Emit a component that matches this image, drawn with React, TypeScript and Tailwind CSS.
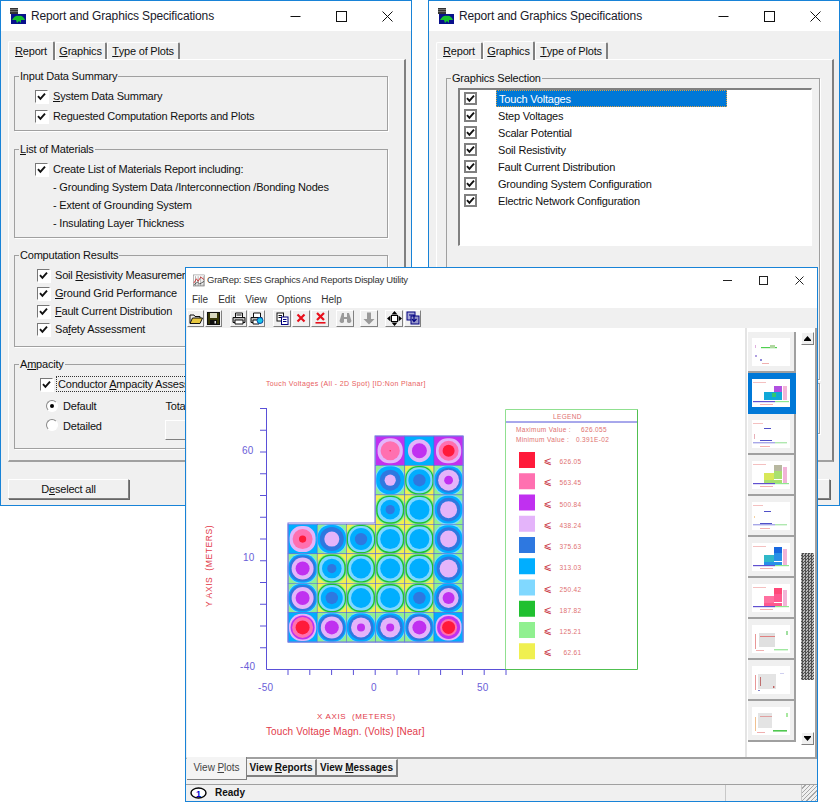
import * as React from "react";

const R = "#ff1a3a";
const K = "#ff70b0";
const P = "#c030f0";
const L = "#e4b4fa";
const B = "#2e78e0";
const C = "#00aeff";
const A = "#80d8ff";
const G = "#20c030";
const M = "#90f090";
const Y = "#f0f050";

const LEGEND: [string, string][] = [
  [R, "626.05"],
  [K, "563.45"],
  [P, "500.84"],
  [L, "438.24"],
  [B, "375.63"],
  [C, "313.03"],
  [A, "250.42"],
  [G, "187.82"],
  [M, "125.21"],
  [Y, "62.61"],
];

type Cell = { bg: string; rings: [string, number][] };

const cy: Cell = { bg: Y, rings: [[M, 15], [G, 14], [A, 12.6], [C, 10]] };
const bl: Cell = { bg: Y, rings: [[M, 15], [G, 14], [A, 12.6], [C, 9.8], [B, 4.6]] };
const bs: Cell = { bg: Y, rings: [[M, 15], [G, 14.2], [A, 13], [C, 11], [B, 6.2]] };
const li: Cell = { bg: M, rings: [[A, 15], [C, 14.2], [B, 12], [L, 7.5]] };
const la: Cell = { bg: M, rings: [[A, 15], [C, 13.8], [B, 11.8], [L, 8.5]] };
const pu: Cell = { bg: M, rings: [[A, 15], [C, 14.2], [B, 13], [L, 11], [P, 7]] };
const ps: Cell = { bg: M, rings: [[A, 15], [C, 14.2], [B, 12.5], [L, 10], [P, 4]] };
const pt: Cell = { bg: C, rings: [[L, 11.5], [P, 7.5]] };

const HEAT: (Cell | null)[][] = [
  [null, null, null, { bg: P, rings: [[L, 12.6], [K, 9.6], [R, 0.7]] }, pt, { bg: P, rings: [[L, 12.6], [K, 10], [R, 6]] }],
  [null, null, null, { bg: M, rings: [[A, 15], [C, 14], [B, 10.5], [L, 5.6]] }, bs, { bg: M, rings: [[A, 15], [C, 14], [B, 12.5], [L, 10.5], [P, 4.4]] }],
  [null, null, null, bl, cy, la],
  [{ bg: C, rings: [[L, 13], [K, 10], [R, 3.6]] }, li, bs, cy, cy, la],
  [pu, bl, cy, cy, cy, { bg: M, rings: [[A, 15], [C, 14.4], [B, 12], [L, 9]] }],
  [pu, bs, cy, cy, bs, { bg: M, rings: [[A, 15], [C, 14.4], [B, 12.5], [L, 10], [P, 6]] }],
  [{ bg: C, rings: [[L, 13.6], [P, 12], [K, 10.5], [R, 7]] }, pu, ps, ps, pu, { bg: C, rings: [[L, 13], [P, 11.5], [K, 8.5], [R, 6.5]] }],
];

function HeatMap() {
  const x0 = 288;
  const y0 = 436;
  const w = 29.2;
  const h = 29.45;
  return (
    <g>
      {HEAT.map((row, r) =>
        row.map((cell, c) => {
          if (!cell) return null;
          const x = x0 + c * w;
          const y = y0 + r * h;
          const cx = x + w / 2;
          const cyy = y + h / 2;
          return (
            <g key={`${r}-${c}`}>
              <rect x={x} y={y} width={w} height={h} fill={cell.bg} />
              {cell.rings.map(([fill, rad], i) => (
                <rect key={i} x={cx - rad} y={cyy - rad} width={rad * 2} height={rad * 2} rx={rad * (rad > 12.5 ? 0.9 : 1)} fill={fill} />
              ))}
              <rect x={x} y={y} width={w} height={h} fill="none" stroke="#4a60e0" strokeWidth="0.5" />
            </g>
          );
        }),
      )}
      <path d="M288 523 H375 V436 H463 V642 H288 Z" fill="none" stroke="#7f78e0" strokeWidth="1.1" />
    </g>
  );
}

function Plot() {
  const yTicks = Array.from({ length: 12 }, (_, i) => 408.5 + i * 21.75);
  const xTicks = Array.from({ length: 11 }, (_, i) => 288 + i * 21.8);
  return (
    <svg width="558" height="429" viewBox="187 328 558 429" className="block shrink-0" fontFamily="'Liberation Sans', sans-serif">
      <text x="266" y="386" fontSize="7" fill="#e86060" letterSpacing="0.36">
        Touch Voltages (All - 2D Spot) [ID:Non Planar]
      </text>
      <path d="M266.5 408 V669.5 H506" fill="none" stroke="#5a50d8" strokeWidth="1" />
      {yTicks.map((y) => (
        <line key={y} x1="260" x2="266" y1={y} y2={y} stroke="#5a50d8" />
      ))}
      {xTicks.map((x) => (
        <line key={x} x1={x} x2={x} y1="669" y2="675" stroke="#5a50d8" />
      ))}
      <g fontSize="10" fill="#6a60d8" letterSpacing="0.3">
        <text x="242" y="454">60</text>
        <text x="243" y="561">10</text>
        <text x="240" y="670">-40</text>
        <text x="258" y="691">-50</text>
        <text x="371" y="691">0</text>
        <text x="477" y="691">50</text>
      </g>
      <text x="212" y="607" fontSize="8.5" fill="#e23a4a" letterSpacing="0.6" transform="rotate(-90 212 607)">
        Y AXIS&nbsp;&nbsp;(METERS)
      </text>
      <text x="317" y="719" fontSize="8" fill="#e23a4a" letterSpacing="0.65">
        X AXIS&nbsp;&nbsp;(METERS)
      </text>
      <text x="266" y="735" fontSize="10" fill="#e23a4a" letterSpacing="0.12">
        Touch Voltage Magn. (Volts) [Near]
      </text>

      <HeatMap />

      <path d="M505.5 669 V409.5 H637.5" fill="none" stroke="#90e090" strokeWidth="1" />
      <path d="M637.5 409.5 V669.5 H505.5" fill="none" stroke="#50c050" strokeWidth="1" />
      <line x1="506" x2="637" y1="422" y2="422" stroke="#5050d8" />
      <g fontSize="6.5" fill="#e07070" letterSpacing="0.35">
        <text x="553" y="418.5">LEGEND</text>
        <text x="516" y="432">Maximum Value :</text>
        <text x="581" y="432">626.055</text>
        <text x="516" y="442">Minimum Value :</text>
        <text x="576" y="442">0.391E-02</text>
        {LEGEND.map(([fill, value], i) => {
          const y = 452 + i * 21.25;
          return (
            <g key={value}>
              <rect x="519" y={y} width="16" height="16" fill={fill} />
              <text x="543.5" y={y + 12} fontSize="10" fill="#c83040" letterSpacing="0" fontFamily="'DejaVu Sans', sans-serif">
                ⩽
              </text>
              <text x="581.5" y={y + 12} textAnchor="end">
                {value}
              </text>
            </g>
          );
        })}
      </g>
    </svg>
  );
}

function WinControls() {
  return (
    <div className="ml-auto flex items-center gap-[35px]">
      <svg width="11" height="11" viewBox="0 0 11 11"><path d="M0.5 5.5 H10.5" stroke="#111" /></svg>
      <svg width="11" height="11" viewBox="0 0 11 11"><rect x="0.5" y="0.5" width="10" height="10" fill="none" stroke="#111" /></svg>
      <svg width="11" height="11" viewBox="0 0 11 11"><path d="M0.5 0.5 L10.5 10.5 M10.5 0.5 L0.5 10.5" stroke="#111" /></svg>
    </div>
  );
}

function SesIcon() {
  return (
    <svg width="16" height="17" viewBox="0 0 16 17" className="shrink-0">
      <rect x="0" y="0" width="8" height="6" fill="#333" />
      <path d="M0 1.5 H8 M0 3.5 H8" stroke="#999" strokeWidth="0.6" />
      <rect x="1" y="6" width="15" height="10" fill="#08108c" />
      <path d="M2 12 C4 8 7 7 9 8 C11 7 14 9 15 12 L11 12 L11 15 L9 13 L7 15 L6 12 Z" fill="#18c030" />
    </svg>
  );
}

function GraRepIcon() {
  return (
    <svg width="12" height="13" viewBox="0 0 14 14" className="shrink-0">
      <rect x="0.5" y="0.5" width="13" height="13" fill="#fff" stroke="#777" strokeWidth="0.6" />
      <path d="M1 10 L4 5 L6 8 L9 3 L13 6" fill="none" stroke="#e02828" />
      <path d="M1 12.5 H13 M3 2 V13 M6 2 V13 M9 2 V13 M12 2 V13" stroke="#444" strokeWidth="0.5" />
      <path d="M1 12 L5 9 L8 11 L13 8" fill="none" stroke="#222" strokeWidth="0.8" />
    </svg>
  );
}

function CheckMark() {
  return (
    <svg width="9" height="9" viewBox="0 0 9 9">
      <path d="M1 4.2 L3.4 6.8 L8 1.6" fill="none" stroke="#111" strokeWidth="1.9" />
    </svg>
  );
}

function Check() {
  return (
    <span className="flex h-[13px] w-[13px] shrink-0 items-center justify-center border border-t-[#777] border-r-white border-b-white border-l-[#777] bg-white shadow-[1px_1px_0_#fff]">
      <CheckMark />
    </span>
  );
}

function ListCheck() {
  return (
    <span className="flex h-[13px] w-[13px] shrink-0 items-center justify-center border-2 border-[#808080] bg-white">
      <CheckMark />
    </span>
  );
}

function Radio({ on }: { on?: boolean }) {
  return (
    <span className="flex h-[12px] w-[12px] shrink-0 items-center justify-center rounded-full border border-t-[#888] border-r-white border-b-white border-l-[#888] bg-white">
      {on && <span className="h-[4px] w-[4px] rounded-full bg-black" />}
    </span>
  );
}

function Group({ label, className, children }: { label: React.ReactNode; className?: string; children?: React.ReactNode }) {
  return (
    <fieldset className={`border border-[#a0a0a0] shadow-[1px_1px_0_#fff] ${className ?? ""}`}>
      <legend className="ml-[4px] px-[1px] leading-[14px]">{label}</legend>
      {children}
    </fieldset>
  );
}

function CheckRow({ className, children }: { className?: string; children: React.ReactNode }) {
  return (
    <div className={`flex items-center gap-[5px] ${className ?? ""}`}>
      <Check />
      <span>{children}</span>
    </div>
  );
}

function TabStrip({ active }: { active: string }) {
  const tabs: { id: string; w: string; node: React.ReactNode }[] = [
    { id: "report", w: "w-[47px]", node: <><u>R</u>eport</> },
    { id: "graphics", w: "w-[52px]", node: <><u>G</u>raphics</> },
    { id: "plots", w: "w-[73px]", node: <><u>T</u>ype of Plots</> },
  ];
  return (
    <div className="flex h-[18px] items-end whitespace-nowrap">
      {tabs.map((t) => (
        <div
          key={t.id}
          className={`flex items-center justify-center rounded-t-[2px] border-t border-r-2 border-l border-t-white border-r-[#808080] border-l-white ${t.w} ${
            t.id === active ? "relative z-10 -mb-[1px] h-[19px] bg-[#f0f0f0]" : "h-[17px]"
          }`}
        >
          {t.node}
        </div>
      ))}
    </div>
  );
}

function Panel({ className, children }: { className: string; children?: React.ReactNode }) {
  return (
    <div className={`h-[403px] border-t border-r-2 border-b-2 border-l border-t-white border-r-[#808080] border-b-[#a0a0a0] border-l-white ${className}`}>
      {children}
    </div>
  );
}

function SpecWindow({ className, active, children }: { className: string; active: string; children: React.ReactNode }) {
  return (
    <div className={`absolute top-0 flex h-[506px] w-[412px] flex-col border border-[#1883d7] bg-[#f0f0f0] font-['Liberation_Sans',sans-serif] text-[11px] leading-[14px] tracking-[-0.2px] text-[#111] ${className}`}>
      <div className="flex h-[30px] shrink-0 items-center bg-white pr-[18px] pl-[9px]">
        <SesIcon />
        <span className="ml-[5px] text-[12px] tracking-[-0.15px] text-[#1a1a2a]">Report and Graphics Specifications</span>
        <WinControls />
      </div>
      <div className="flex-1 px-[7px] pt-[10px]">
        <TabStrip active={active} />
        {children}
      </div>
    </div>
  );
}

function ReportTab() {
  return (
    <>
      <Panel className="w-[398px] pt-[9px] pl-[5px]">
        <Group label="Input Data Summary" className="h-[62px] w-[374px]">
          <div className="pt-[6px] pl-[20px]">
            <CheckRow><u>S</u>ystem Data Summary</CheckRow>
            <CheckRow className="mt-[6px]">Reguested Computation Reports and Plots</CheckRow>
          </div>
        </Group>
        <Group label={<><u>L</u>ist of Materials</>} className="mt-[11px] h-[96px] w-[374px]">
          <div className="pt-[6px] pl-[20px]">
            <CheckRow>Create List of Materials Report including:</CheckRow>
            <div className="mt-[2px] pl-[18px] leading-[18px]">
              <div>- Grounding System Data /Interconnection /Bonding Nodes</div>
              <div>- Extent of Grounding System</div>
              <div>- Insulating Layer Thickness</div>
            </div>
          </div>
        </Group>
        <Group label="Computation Results" className="mt-[10px] h-[99px] w-[374px]">
          <div className="flex flex-col gap-[4px] pt-[6px] pl-[22px] whitespace-nowrap">
            <CheckRow>Soil <u>R</u>esistivity Measurements</CheckRow>
            <CheckRow><u>G</u>round Grid Performance</CheckRow>
            <CheckRow><u>F</u>ault Current Distribution</CheckRow>
            <CheckRow>Sa<u>f</u>ety Assessment</CheckRow>
          </div>
        </Group>
        <Group label={<>A<u>m</u>pacity</>} className="mt-[10px] h-[92px] w-[374px]">
          <div className="pt-[5px] pl-[25px]">
            <div className="flex items-center gap-[3px] whitespace-nowrap">
              <Check />
              <span className="border border-dotted border-[#333] px-[1px]">Conductor <u>A</u>mpacity Assessment</span>
            </div>
            <div className="mt-[7px] flex items-center gap-[5px] pl-[6px]">
              <Radio on />
              <span>Default</span>
              <span className="ml-[64px]">Total</span>
            </div>
            <div className="mt-[6px] flex items-start gap-[5px] pl-[6px]">
              <Radio />
              <span>Detailed</span>
              <span className="mt-[1px] ml-[58px] h-[20px] w-[60px] border border-t-white border-r-[#808080] border-b-[#808080] border-l-white" />
            </div>
          </div>
        </Group>
      </Panel>
      <div className="mt-[17px] flex h-[20px] w-[121px] items-center justify-center border border-t-white border-r-[#808080] border-b-[#808080] border-l-white shadow-[1px_1px_0_#666]">
        D<u>e</u>select all
      </div>
    </>
  );
}

function GraphicsTab() {
  const items = [
    "Touch Voltages",
    "Step Voltages",
    "Scalar Potential",
    "Soil Resistivity",
    "Fault Current Distribution",
    "Grounding System Configuration",
    "Electric Network Configuration",
  ];
  return (
    <>
      <Panel className="w-[398px] pt-[11px] pl-[9px]">
        <Group label="Graphics Selection" className="h-[309px] w-[374px]">
          <div className="pt-[3px] pl-[11px]">
            <div className="h-[158px] w-[354px] border-t-2 border-r border-b border-l-2 border-t-[#808080] border-r-white border-b-white border-l-[#808080] bg-white pl-[4px]">
              {items.map((item, i) => (
                <div key={item} className="flex h-[17px] items-center">
                  <ListCheck />
                  <span
                    className={`ml-[19px] flex h-[17px] items-center pl-[2px] ${
                      i === 0 ? "w-[231px] border border-dotted border-[#e0a040] bg-[#0078d7] text-white" : ""
                    }`}
                  >
                    {item}
                  </span>
                </div>
              ))}
            </div>
          </div>
        </Group>
        <Group label="" className="mt-[3px] h-[51px] w-[374px]" />
      </Panel>
      <div className="mt-[17px] ml-[290px] h-[20px] w-[104px] border border-t-white border-r-[#808080] border-b-[#808080] border-l-white shadow-[1px_1px_0_#666]" />
    </>
  );
}

const ToolBtn = ({ className, children }: { className?: string; children: React.ReactNode }) => (
  <div className={`flex h-[17px] w-[17px] shrink-0 items-center justify-center border border-t-white border-r-[#808080] border-b-[#808080] border-l-white ${className ?? ""}`}>
    {children}
  </div>
);

function Toolbar() {
  return (
    <div className="flex h-[20px] shrink-0 items-center bg-[#f0f0f0] pl-[1px]">
      <ToolBtn>
        <svg width="14" height="13" viewBox="0 0 14 13"><path d="M1 11 V3 H5 L6 4.5 H11 V6" fill="none" stroke="#111" /><path d="M1 11.5 L3.5 6 H13.5 L11 11.5 Z" fill="#e8c840" stroke="#111" /></svg>
      </ToolBtn>
      <ToolBtn className="ml-[1px]">
        <svg width="13" height="13" viewBox="0 0 13 13"><rect x="0.5" y="0.5" width="12" height="12" fill="#383808" stroke="#111" /><rect x="3" y="1" width="7" height="5" fill="#d8d8c0" /><rect x="3" y="8" width="7" height="4" fill="#111" /><rect x="7.5" y="9" width="1.5" height="2.5" fill="#ddd" /></svg>
      </ToolBtn>
      <ToolBtn className="ml-[8px]">
        <svg width="14" height="13" viewBox="0 0 14 13"><path d="M3.5 5 V1 H10.5 V5" fill="#fff" stroke="#111" /><path d="M1 5.5 H13 V10.5 H1 Z" fill="#bbb" stroke="#111" /><path d="M3 8 H11 V12 H3 Z" fill="#fff" stroke="#111" /><path d="M4.5 3 H9.5" stroke="#111" /></svg>
      </ToolBtn>
      <ToolBtn className="ml-[1px]">
        <svg width="14" height="13" viewBox="0 0 14 13"><path d="M3.5 5 V1 H10.5 V5" fill="#fff" stroke="#111" /><path d="M1 5.5 H12 V10.5 H1 Z" fill="#bbb" stroke="#111" /><path d="M3 8 H9 V12 H3 Z" fill="#fff" stroke="#111" /><circle cx="10" cy="8.5" r="3" fill="#18c8e8" stroke="#0848a8" /></svg>
      </ToolBtn>
      <ToolBtn className="ml-[8px] w-[18px]">
        <svg width="13" height="13" viewBox="0 0 13 13"><rect x="1" y="1" width="6.5" height="8" fill="#fff" stroke="#111" /><path d="M2.5 3.5 H6 M2.5 5.5 H6" stroke="#111" /><rect x="5.5" y="5" width="6.5" height="7.5" fill="#fff" stroke="#000080" /><path d="M7 7.5 H10.5 M7 9.5 H10.5" stroke="#000080" /></svg>
      </ToolBtn>
      <ToolBtn className="ml-[1px] w-[18px]">
        <svg width="10" height="10" viewBox="0 0 10 10"><path d="M1.5 1.5 L8.5 8.5 M8.5 1.5 L1.5 8.5" stroke="#e8101c" strokeWidth="2.2" /></svg>
      </ToolBtn>
      <ToolBtn className="ml-[1px] w-[18px]">
        <svg width="11" height="12" viewBox="0 0 11 12"><path d="M2 1 L9 8 M9 1 L2 8" stroke="#e8101c" strokeWidth="2.2" /><path d="M0.5 10.8 H10.5" stroke="#e8101c" strokeWidth="1.6" /></svg>
      </ToolBtn>
      <ToolBtn className="ml-[7px] w-[18px]">
        <svg width="13" height="12" viewBox="0 0 13 12"><path d="M3 1 H5 V5 H8 V1 H10 L12.5 9 A2.5 2.5 0 0 1 8 10 V7 H5 V10 A2.5 2.5 0 0 1 0.5 9 Z" fill="#9a9a9a" /></svg>
      </ToolBtn>
      <ToolBtn className="ml-[6px] w-[18px]">
        <svg width="12" height="13" viewBox="0 0 12 13"><path d="M4 0.5 H8 V7 H11.5 L6 12.5 L0.5 7 H4 Z" fill="#9a9a9a" /></svg>
      </ToolBtn>
      <ToolBtn className="ml-[7px] w-[18px]">
        <svg width="15" height="15" viewBox="0 0 15 15"><path d="M7.5 0 L10.5 3.5 H4.5 Z M7.5 15 L4.5 11.5 H10.5 Z M0 7.5 L3.5 4.5 V10.5 Z M15 7.5 L11.5 10.5 V4.5 Z" fill="#000" /><rect x="4.5" y="4.5" width="6" height="6" fill="#fff" stroke="#000" /></svg>
      </ToolBtn>
      <ToolBtn className="ml-[1px]">
        <svg width="14" height="14" viewBox="0 0 14 14"><rect x="1" y="1" width="8" height="8" fill="#a8a8d8" stroke="#000080" /><rect x="5" y="5" width="8" height="8" fill="#9898c8" stroke="#000080" /><path d="M3 4 H8 V10 M6 8 L8 10.5 L10.5 8" fill="none" stroke="#000080" strokeWidth="1.2" /></svg>
      </ToolBtn>
    </div>
  );
}

type Mark = [number, number, number, number, string];

const HEAT_MARKS = (a: string, b: string, c: string): Mark[] => [
  [22, 4, 8, 6, b], [22, 10, 8, 8, a], [12, 12, 10, 7, c], [12, 19, 18, 3, a],
  [31, 6, 4, 16, "#f2b4d8"], [1, 3, 13, 1, "#f4c0c0"], [8, 25, 13, 1, "#f4b0b0"],
  [1, 22, 22, 1.2, "#6050d0"], [23, 22, 14, 1.2, "#90e890"],
];

const THUMBS: { selected?: boolean; marks: Mark[] }[] = [
  { marks: [[9, 9, 16, 1.2, "#50d050"], [18, 7, 5, 3, "#b0d8a0"], [3, 7, 1, 3, "#e0b0e0"], [3, 17, 2, 2, "#b0a0e0"], [8, 21, 2, 2, "#9088d8"], [10, 25, 7, 1, "#f0b0b0"]] },
  { selected: true, marks: [[22, 7, 8, 7, "#b050e0"], [12, 13, 18, 8, "#10a8d8"], [20, 14, 4, 4, "#30c870"], [31, 7, 4, 14, "#f2b4d8"], [1, 3, 13, 1, "#f4c0c0"], [8, 25, 13, 1, "#f4b0b0"], [1, 22, 22, 1.2, "#6050d0"], [23, 22, 14, 1.2, "#90e890"]] },
  { marks: [[12, 8, 7, 1, "#5050c8"], [8, 20, 12, 1, "#5050c8"], [2, 14, 1, 5, "#e8b0b8"], [1, 22, 22, 1.4, "#a8a8e8"], [23, 22, 12, 1.4, "#b0e8b0"], [8, 26, 10, 1, "#f4b0b0"], [1, 3, 10, 1, "#f4c0c0"]] },
  { marks: HEAT_MARKS("#a8e070", "#b8b8a0", "#d8e858") },
  { marks: [[12, 9, 7, 1, "#5050c8"], [8, 21, 12, 1, "#5050c8"], [2, 14, 1, 2, "#f4d0a0"], [1, 22, 22, 1.4, "#a8a8e8"], [23, 22, 12, 1.4, "#b0e8b0"], [8, 26, 10, 1, "#f4b0b0"], [1, 3, 10, 1, "#f4c0c0"]] },
  { marks: HEAT_MARKS("#2890e8", "#1868e0", "#30b8c8") },
  { marks: HEAT_MARKS("#ff5890", "#ff4878", "#ff70a0") },
  { marks: [[7, 8, 16, 14, "#e0e0e0"], [3, 9, 1, 15, "#e89898"], [8, 11, 15, 1, "#e08080"], [34, 6, 2, 4, "#a0e0a0"], [22, 24, 14, 1.4, "#a0e8a0"], [4, 25, 8, 1, "#f0b0b0"]] },
  { marks: [[6, 8, 18, 15, "#e4e4e4"], [3, 9, 1, 15, "#e89898"], [8, 11, 1, 9, "#c07070"], [21, 20, 1.4, 2, "#c06060"], [6, 24, 2, 1, "#8080c8"], [28, 7, 4, 1, "#d0d0f0"]] },
  { marks: [[6, 6, 14, 15, "#e4e4e4"], [3, 10, 1, 14, "#f0c090"], [8, 9, 12, 1, "#e0a0a0"], [34, 6, 2, 4, "#a8e8a0"], [21, 23, 14, 1.6, "#50c850"], [5, 25, 8, 1, "#f0b0b0"]] },
];

function Thumb({ selected, marks }: { selected?: boolean; marks: Mark[] }) {
  return (
    <div
      className={`flex h-[41px] w-[48px] shrink-0 items-center justify-center border-r-2 border-b-2 ${
        selected ? "border-[#0078d7] bg-[#0078d7]" : "border-[#a0a0a0] bg-[#f0f0f0]"
      }`}
    >
      <svg width="38" height="28" viewBox="0 0 38 28" className="bg-white">
        {marks.map(([x, y, w, h, fill], i) => (
          <rect key={i} x={x} y={y} width={w} height={h} fill={fill} />
        ))}
      </svg>
    </div>
  );
}

function ScrollBtn({ up }: { up?: boolean }) {
  return (
    <div className="flex h-[13px] w-[13px] shrink-0 items-center justify-center border border-t-white border-r-[#808080] border-b-[#808080] border-l-white bg-[#f0f0f0]">
      <svg width="7" height="5" viewBox="0 0 7 5">
        <path d={up ? "M3.5 0 L7 4 V5 H0 V4 Z" : "M0 0 H7 V1 L3.5 5 L0 1 Z"} fill="#000" />
      </svg>
    </div>
  );
}

function ThumbStrip() {
  return (
    <div className="flex h-[429px] flex-1 border-r-2 border-[#a0a0a0] bg-white">
      <div className="w-[2px] shrink-0 bg-[#e4e4e4]" />
      <div className="ml-[1px] flex w-[48px] shrink-0 flex-col pt-[4px]">
        {THUMBS.map((t, i) => (
          <Thumb key={i} {...t} />
        ))}
      </div>
      <div className="ml-[5px] flex w-[13px] shrink-0 flex-col pt-[4px]">
        <ScrollBtn up />
        <div className="h-[208px] shrink-0 bg-white" />
        <div className="h-[127px] shrink-0 bg-[repeating-conic-gradient(#505050_0_25%,#b8b8b8_0_50%)] bg-[length:3px_3px]" />
        <div className="h-[52px] shrink-0 bg-white" />
        <ScrollBtn />
      </div>
    </div>
  );
}

function ViewerWindow() {
  return (
    <div className="absolute top-[267px] left-[185px] z-20 flex h-[535px] w-[633px] flex-col border border-[#1883d7] bg-[#f0f0f0] font-['Liberation_Sans',sans-serif] text-[10px] leading-[14px] text-[#333]">
      <div className="flex h-[24px] shrink-0 items-center bg-white pr-[13px] pl-[7px]">
        <GraRepIcon />
        <span className="ml-[2px] text-[9.5px] tracking-[-0.25px]">GraRep: SES Graphics And Reports Display Utility</span>
        <div className="ml-auto flex items-center gap-[27px]">
          <svg width="9" height="9" viewBox="0 0 9 9"><path d="M0 4.5 H9" stroke="#222" /></svg>
          <svg width="9" height="9" viewBox="0 0 9 9"><rect x="0.5" y="0.5" width="8" height="8" fill="none" stroke="#222" /></svg>
          <svg width="9" height="9" viewBox="0 0 9 9"><path d="M0.5 0.5 L8.5 8.5 M8.5 0.5 L0.5 8.5" stroke="#222" /></svg>
        </div>
      </div>
      <div className="flex h-[16px] shrink-0 items-center gap-[10px] bg-white pl-[6px]">
        <span>File</span>
        <span>Edit</span>
        <span>View</span>
        <span>Options</span>
        <span>Help</span>
      </div>
      <Toolbar />
      <div className="flex shrink-0 overflow-hidden border-b-2 border-l border-[#a0a0a0] border-l-[#f0f0f0] bg-white">
        <Plot />
        <ThumbStrip />
      </div>
      <div className="flex flex-1 items-start pl-[1px]">
        <div className="-mt-[2px] flex h-[23px] w-[60px] items-center justify-center border-r border-b border-[#808080] bg-[#f4f4f4] text-[#444]">
          View <u className="ml-[2.5px]">P</u>lots
        </div>
        <div className="flex h-[18px] w-[70px] items-center justify-center border-t border-r-2 border-b-2 border-[#808080] border-t-white font-bold text-[#111]">
          View <u className="ml-[2.5px]">R</u>eports
        </div>
        <div className="flex h-[18px] w-[81px] items-center justify-center border-t border-r-2 border-b-2 border-[#808080] border-t-white font-bold text-[#111]">
          View <u className="ml-[2.5px]">M</u>essages
        </div>
      </div>
      <div className="flex h-[17px] shrink-0 items-center border-t border-[#a0a0a0]">
        <svg width="17" height="12" viewBox="0 0 17 12" className="ml-[4px] shrink-0">
          <ellipse cx="8.5" cy="6" rx="7.5" ry="5" fill="#fff" stroke="#000" strokeWidth="1.4" />
          <text x="8.5" y="9.5" textAnchor="middle" fontSize="9" fontWeight="bold" fill="#0000d0" fontFamily="'Liberation Sans', sans-serif">1</text>
        </svg>
        <span className="ml-[8px] font-bold text-[#111]">Ready</span>
        <div className="ml-auto h-full w-[76px] border-l border-[#c8c8c8]" />
        <div className="h-full w-[16px] border-l border-[#c8c8c8] bg-[repeating-linear-gradient(135deg,#f0f0f0_0_2px,#a8a8a8_2px_3px)]" />
      </div>
    </div>
  );
}

export default function App() {
  return (
    <div className="relative h-[802px] w-[840px] overflow-hidden bg-white">
      <SpecWindow className="left-0" active="report">
        <ReportTab />
      </SpecWindow>
      <SpecWindow className="left-[428px]" active="graphics">
        <GraphicsTab />
      </SpecWindow>
      <ViewerWindow />
    </div>
  );
}
